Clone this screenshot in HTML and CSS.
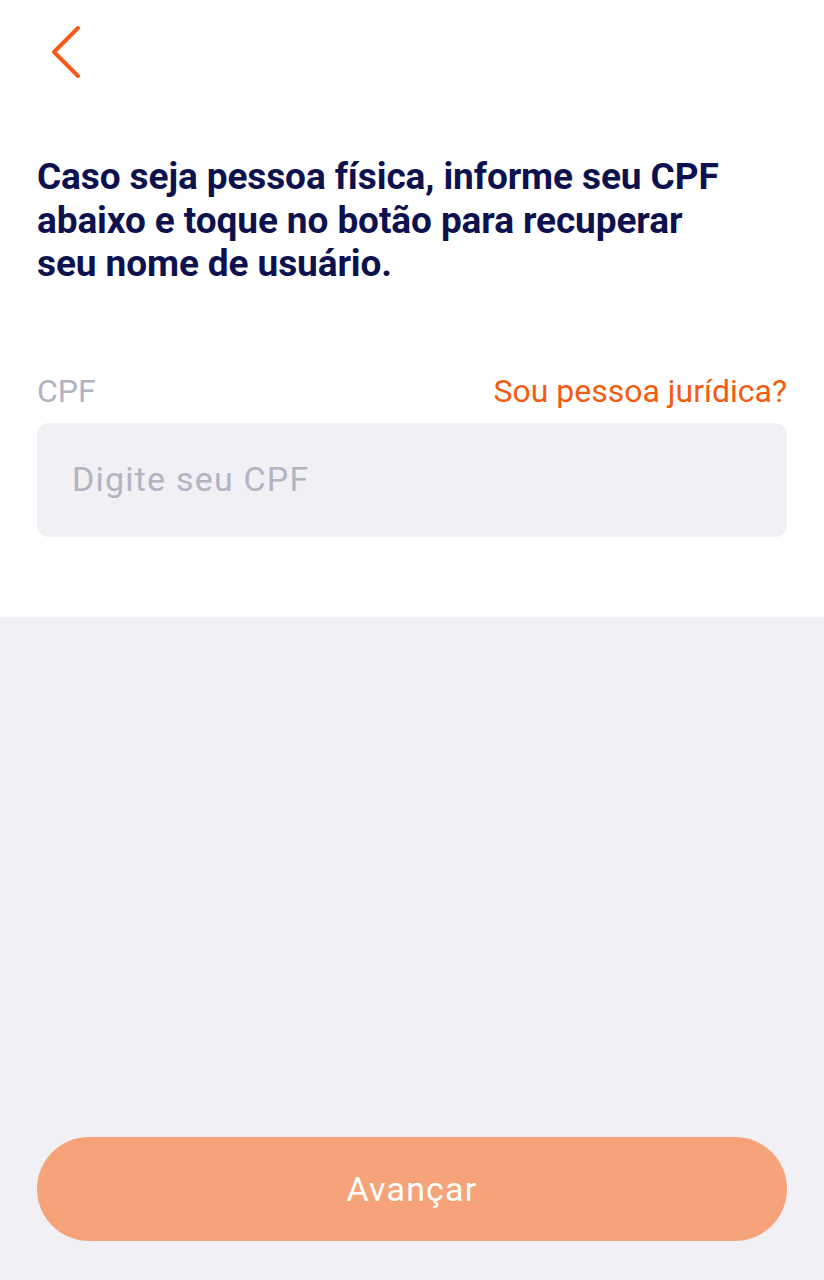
FILE: index.html
```html
<!DOCTYPE html>
<html lang="pt-BR">
<head>
<meta charset="utf-8">
<link rel="stylesheet" href="styles.css">
<title>Recuperar usuário</title>
</head>
<body>
<div class="screen">
  <section class="top">
    <button class="back" aria-label="Voltar">
      <svg width="40" height="60" viewBox="0 0 40 60"><path d="M27 4 L3 28 L27 52" fill="none" stroke="#f25c19" stroke-width="4" stroke-linecap="round" stroke-linejoin="round"/></svg>
    </button>
    <h1 class="title">Caso seja pessoa física, informe seu CPF abaixo e toque no botão para recuperar seu nome de usuário.</h1>
    <div class="field-head">
      <span class="label">CPF</span>
      <a class="link">Sou pessoa jurídica?</a>
    </div>
    <div class="input">Digite seu CPF</div>
  </section>
  <section class="bottom">
    <button class="cta">Avançar</button>
  </section>
</div>
</body>
</html>
```
FILE: styles.css
```css
* { box-sizing: border-box; }
html, body { margin: 0; padding: 0; }
body { font-family: Roboto, "Noto Sans", sans-serif; background: #f0f0f5; }
.screen { width: 824px; height: 1280px; display: flex; flex-direction: column; }
.top { background: #fff; padding: 24px 37px 0; height: 617px; }
.back { border: 0; background: none; padding: 0; margin: 0 0 0 14px; display: block; width: 40px; height: 60px; }
.title { margin: 71px 0 0; font-size: 37px; line-height: 43.5px; font-weight: 700; color: #0d124f; letter-spacing: -0.1px; max-width: 700px; }
.field-head { display: flex; justify-content: space-between; align-items: baseline; margin-top: 85px; font-size: 32px; line-height: 40px; }
.label { color: #b3b2c2; }
.link { color: #f25c10; }
.input { margin-top: 12px; height: 114px; border-radius: 12px; background: #f0f0f5; color: #b4b3c3; font-size: 34px; letter-spacing: 1.2px; display: flex; align-items: center; padding: 0 35px 2px; }
.bottom { flex: 1; display: flex; align-items: flex-end; padding: 0 37px 39px; }
.cta { width: 100%; height: 104px; border: 0; border-radius: 52px; background: #f6a379; color: #fff; font-family: Roboto, sans-serif; font-size: 34px; letter-spacing: 1.2px; }
```
